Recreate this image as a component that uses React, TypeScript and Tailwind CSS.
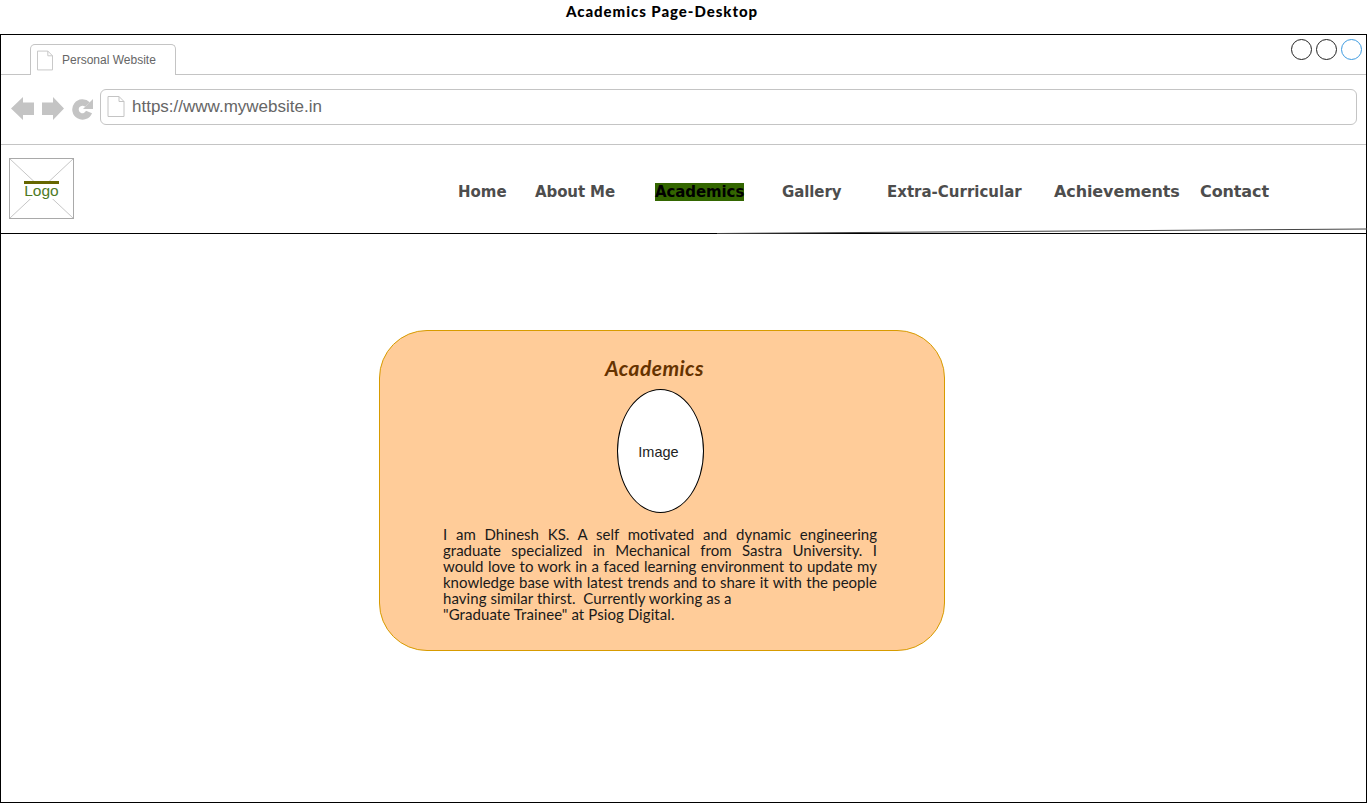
function PageIcon({ className }: { className: string }) {
  return (
    <svg viewBox="0 0 17 21" className={className} fill="none" stroke="#c4c4c4" strokeWidth="1">
      <path d="M0.5 0.5H11.5L16.5 5.5V20.5H0.5Z" fill="#fff" />
      <path d="M11.5 0.5V5.5H16.5" />
    </svg>
  );
}

function NavIcons() {
  return (
    <svg width="84" height="23" viewBox="0 0 84 23" className="mt-[3px] shrink-0" fill="#c4c4c4">
      <path d="M0 11.5 12 0V5.5H23V18H12V23Z" />
      <path d="M53 11.5 42 0V5.5H31V18H42V23Z" />
      <path d="M76.5 7.5A7 7 0 1 0 78 15" fill="none" stroke="#c4c4c4" strokeWidth="6.5" />
      <path d="M82 2V12H72Z" />
    </svg>
  );
}

const comic = "font-['Comic_Sans_MS','Lato',sans-serif]";

const justifiedLines = [
  'I am Dhinesh KS. A self motivated and dynamic engineering',
  'graduate specialized in Mechanical from Sastra University. I',
  'would love to work in a faced learning environment to update my',
  'knowledge base with latest trends and to share it with the people',
];

export default function App() {
  return (
    <div className="relative h-[804px] w-[1370px] overflow-hidden bg-white font-['Liberation_Sans',sans-serif]">
      <div className={`${comic} h-[34px] w-[1324px] pt-[1px] text-center text-[15px] leading-[20px] font-black tracking-[0.95px] text-black`}>
        Academics Page-Desktop
      </div>
      <div className="relative h-[769px] w-[1367px] border border-black">
        {/* tab strip */}
        <div className="flex h-[40px] border-b border-[#c4c4c4] pl-[29px]">
          <div className="mt-[9px] -mb-px flex h-[31px] w-[146px] items-center rounded-t-[5px] border border-b-0 border-[#c4c4c4] bg-white pl-[6px]">
            <PageIcon className="h-[21px] w-[16px]" />
            <span className="ml-[9px] text-[12px] text-[#666666]">Personal Website</span>
          </div>
          <div className="ml-auto mr-[4px] mt-[4px] flex gap-[4px]">
            <div className="h-[21px] w-[21px] rounded-full border border-[#222222]" />
            <div className="h-[21px] w-[21px] rounded-full border border-[#222222]" />
            <div className="h-[21px] w-[21px] rounded-full border border-[#3d9be0]" />
          </div>
        </div>
        {/* address bar */}
        <div className="flex h-[70px] items-center border-b border-[#c4c4c4] pb-[6px] pl-[10px] pr-[9px]">
          <NavIcons />
          <div className="ml-[5px] flex h-[36px] flex-1 items-center rounded-[6px] border border-[#c4c4c4] pl-[6px]">
            <PageIcon className="h-[21px] w-[18px]" />
            <span className="ml-[7px] text-[17px] text-[#666666]">https://www.mywebsite.in</span>
          </div>
        </div>
        {/* site nav */}
        <div className="flex h-[89px] border-b border-black pl-[8px] font-['DejaVu_Sans',sans-serif] font-bold text-[#4d4d4d]">
          <div className="relative mt-[13px] flex h-[61px] w-[65px] justify-center overflow-hidden border border-[#a9a9a9]">
            <svg viewBox="0 0 65 61" preserveAspectRatio="none" className="absolute inset-0 h-full w-full" stroke="#c4c4c4">
              <path d="M0 0 65 61M65 0 0 61" />
            </svg>
            <span className="relative mt-[22px] h-[18px] border-t-[3px] border-[#666600] bg-white text-[15.5px] leading-[14px] font-normal text-[#4d7a1f] font-['Liberation_Sans',sans-serif]">
              Logo
            </span>
          </div>
          <nav className="mt-[37px] flex h-[20px] items-center text-[15px] leading-[20px] whitespace-nowrap">
            <span className="ml-[384px] w-[77px]">Home</span>
            <span className="w-[120px] tracking-[-0.1px]">About Me</span>
            <span className="h-[18px] w-[89px] bg-[#336600] leading-[18px] tracking-[-0.1px] text-black">Academics</span>
            <span className="ml-[38px] w-[105px] tracking-[-0.1px]">Gallery</span>
            <span className="w-[167px]">Extra-Curricular</span>
            <span className="w-[146px] text-[16px] tracking-[-0.1px]">Achievements</span>
            <span className="text-[16px] tracking-[-0.1px]">Contact</span>
          </nav>
        </div>
        {/* slightly skewed line left in the wireframe */}
        <svg width="650" height="6" viewBox="0 0 650 6" className="absolute right-[-1px] top-[193px]" fill="none" stroke="#444444">
          <path d="M0 5.5 650 1" />
        </svg>
        {/* content card */}
        <div className="ml-[378px] mt-[96px] h-[321px] w-[566px] rounded-[48px] border border-[#d79b00] bg-[#ffcc99] pl-[63px] pr-[67px] pt-[24px]">
          <h2 className={`${comic} w-[423px] text-center text-[21px] leading-[26px] font-bold italic tracking-[0.45px] text-[#663300]`}>
            Academics
          </h2>
          <div className="ml-[174px] mt-[8px] flex h-[124px] w-[87px] items-center justify-center rounded-[50%] border border-black bg-white pr-[4px] pt-[3px] text-[14.5px] text-[#222222]">
            Image
          </div>
          <div className={`${comic} mt-[13px] text-[15px] leading-[16px] text-[#1a1a1a]`}>
            {justifiedLines.map(line => (
              <p key={line} className="text-justify [text-align-last:justify]">{line}</p>
            ))}
            <p className="tracking-[0.06px]">having similar thirst.&nbsp; Currently working as a</p>
            <p className="tracking-[0.08px]">"Graduate Trainee" at Psiog Digital.</p>
          </div>
        </div>
      </div>
    </div>
  );
}
